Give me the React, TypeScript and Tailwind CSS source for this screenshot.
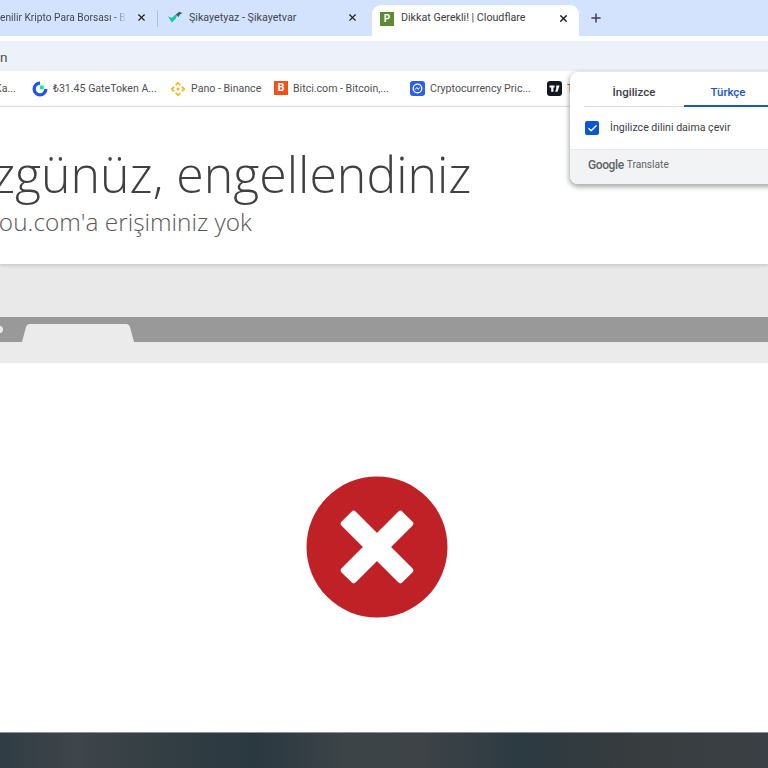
import { Check, Plus, X } from 'lucide-react';

const ui = "font-['Roboto',sans-serif]";

function GateIcon() {
  return (
    <svg width="16" height="16" viewBox="0 0 16 16" fill="none">
      <path d="M8 .5a7.500 7.500 0 1 0 7.500 7.500h-3.300A4.200 4.200 0 1 1 8 3.800z" fill="#2354e6" />
      <rect x="8" y="4.500" width="3.800" height="3.800" fill="#17e6a1" />
    </svg>
  );
}

function BinanceIcon() {
  return (
    <svg width="16" height="16" viewBox="0 0 16 16" fill="#f3ba2f">
      <path d="M8 .5 11 3.500 9.700 4.800 8 3.100 6.300 4.800 5 3.500zM3.500 5 4.800 6.300 3.100 8 4.800 9.700 3.500 11 .5 8zM12.500 5 15.500 8l-3 3-1.300-1.300L12.900 8l-1.700-1.700zM8 6.100 9.900 8 8 9.900 6.100 8zM5 12.500l1.300-1.300L8 12.900l1.700-1.700 1.300 1.300-3 3z" />
    </svg>
  );
}

function CmcIcon() {
  return (
    <svg width="15" height="15" viewBox="0 0 15 15" fill="none">
      <rect width="15" height="15" rx="3" fill="#2b5fe8" />
      <circle cx="7.500" cy="7.500" r="4.300" stroke="#fff" strokeWidth="1.300" />
      <path d="M5.200 8.600 6.800 6.400l1.400 2 1.600-2" stroke="#fff" strokeWidth="1" />
    </svg>
  );
}

function TradingViewIcon() {
  return (
    <svg width="15" height="15" viewBox="0 0 15 15">
      <rect width="15" height="15" rx="3" fill="#131722" />
      <path d="M2.500 4.500h5v2H6.400v4.200H4.200V6.500H2.500zM9.200 4.500h3.300l-2 6.200H8.200l1.100-3.500z" fill="#fff" />
    </svg>
  );
}

function SikayetIcon() {
  return (
    <svg width="15" height="13" viewBox="0 0 15 13">
      <path d="M0 5.500 3.800 6.800 9.500 2 8 7.500 3.800 11.500z" fill="#19c7a5" />
      <path d="M8 3.500 11 .8 14.500 2 12 3.500 10.500 6z" fill="#34606f" />
    </svg>
  );
}

function Bookmark({ icon, label, width }: { icon: React.ReactNode; label: string; width: string }) {
  return (
    <div className={`flex items-center gap-[5px] shrink-0 ${width}`}>
      {icon}
      <span className="text-[10.600px] text-[#505050] whitespace-nowrap">{label}</span>
    </div>
  );
}

function BrowserChrome() {
  return (
    <div className={ui}>
      {/* tab strip */}
      <div className="h-[36px] bg-[#d3e3fd] flex items-center text-[10.700px] text-[#3f4650] overflow-hidden">
        <div className="w-[157px] shrink-0 flex items-center justify-between pr-[10px]">
          <span className="w-[126px] overflow-hidden whitespace-nowrap text-[10.200px] [mask-image:linear-gradient(90deg,#000_90%,transparent)]">enilir Kripto Para Borsası - B</span>
          <X size={11} strokeWidth={2.500} className="text-[#1f1f1f]" />
        </div>
        <div className="w-px h-[17px] bg-[#a8c0e4] shrink-0" />
        <div className="w-[214px] shrink-0 flex items-center pl-[10px] pr-[14px]">
          <SikayetIcon />
          <span className="ml-[6px] flex-1 whitespace-nowrap">Şikayetyaz - Şikayetvar</span>
          <X size={11} strokeWidth={2.500} className="text-[#1f1f1f]" />
        </div>
        <div className="w-[207px] h-[31px] mt-[5px] shrink-0 bg-white rounded-t-[9px] flex items-center pb-[4px] pl-[8px] pr-[10px] text-[#3c3c3c]">
          <div className="w-[14px] h-[14px] bg-[#5f8a34] flex items-center justify-center text-white text-[10px] font-bold leading-none">P</div>
          <span className="ml-[7px] flex-1 whitespace-nowrap">Dikkat Gerekli! | Cloudflare</span>
          <X size={11} strokeWidth={3} className="text-[#1f1f1f]" />
        </div>
        <Plus size={14} strokeWidth={2.500} className="ml-[10px] text-[#3c4043]" />
      </div>
      {/* address row */}
      <div className="bg-white pt-[5px]">
        <div className="h-[30px] bg-[#edf2fa] flex items-center text-[13.500px] text-[#4a4a4a] pt-[2px]">
          <span>n</span>
        </div>
      </div>
      {/* bookmarks */}
      <div className="h-[36px] bg-white border-b border-[#e6e6e6] flex items-center overflow-hidden">
        <span className="w-[37px] shrink-0 text-[10.600px] text-[#505050] whitespace-nowrap -ml-[5px]">Ka...</span>
        <Bookmark icon={<GateIcon />} label="₺31.45 GateToken A..." width="w-[138px]" />
        <Bookmark icon={<BinanceIcon />} label="Pano - Binance" width="w-[104px]" />
        <Bookmark
          icon={<div className="w-[14px] h-[14px] bg-[#f2501b] text-white text-[11px] font-bold leading-[14px] text-center">B</div>}
          label="Bitci.com - Bitcoin,..."
          width="w-[136px]"
        />
        <Bookmark icon={<CmcIcon />} label="Cryptocurrency Pric..." width="w-[137px]" />
        <Bookmark icon={<TradingViewIcon />} label="T" width="w-[30px]" />
      </div>
    </div>
  );
}

function TranslatePopup() {
  return (
    <div className={`${ui} absolute left-[570px] top-[72px] w-[220px] h-[112px] bg-white rounded-[8px] shadow-[0_2px_5px_1px_rgba(60,64,67,0.45)] overflow-hidden`}>
      <div className="mx-[14px] h-[35px] flex border-b border-[#dadce0] text-[11.500px] font-medium pt-[8px]">
        <div className="w-[100px] flex items-center justify-center text-[#3c4043]">İngilizce</div>
        <div className="w-[84px] -mb-px border-b-2 border-[#1a56c4] flex items-center justify-center text-[#1a56c4] pl-[4px]">Türkçe</div>
      </div>
      <div className="h-[42px] flex items-center pl-[15px]">
        <div className="w-[14px] h-[14px] rounded-[2px] bg-[#0b57d0] flex items-center justify-center">
          <Check size={11} strokeWidth={3} className="text-white" />
        </div>
        <span className="ml-[11px] text-[10.600px] text-[#3c4043]">İngilizce dilini daima çevir</span>
      </div>
      <div className="h-[35px] bg-[#f1f3f4] border-t border-[#e8eaed] flex items-center pb-[4px] pl-[18px] text-[#5f6368]">
        <span className="text-[12px] tracking-[-0.4px] font-medium">Google</span>
        <span className="ml-[3px] text-[10.200px]">Translate</span>
      </div>
    </div>
  );
}

export default function App() {
  return (
    <div className="relative w-[768px] h-[768px] overflow-hidden bg-white">
      <BrowserChrome />
      {/* page title card */}
      <div className="h-[157px] bg-white font-['Open_Sans',sans-serif] font-light relative shadow-[0_1px_4px_rgba(0,0,0,0.18)] whitespace-nowrap">
        <h1 className="pt-[33px] -ml-[44px] text-[50px] leading-[68px] text-[#404040]">Üzgünüz, engellendiniz</h1>
        <p className="-ml-[14px] -mt-[2px] text-[24.400px] leading-[32px] text-[#595959]">You.com'a erişiminiz yok</p>
      </div>
      {/* browser illustration */}
      <div className="h-[53px] bg-[#e9e9e9]" />
      <div className="h-[25px] bg-[#999999] flex items-end relative overflow-hidden">
        <div className="absolute -left-[4px] top-[9px] w-[7px] h-[7px] rounded-full bg-[#ebebeb]" />
        <svg width="112" height="18" viewBox="0 0 112 18" className="ml-[22px]">
          <path d="M0 18 4 3Q5 0 8 0H104Q107 0 108 3L112 18Z" fill="#ebebeb" />
        </svg>
      </div>
      <div className="h-[21px] bg-[#ebebeb]" />
      {/* error mark */}
      <div className="h-[369px] flex items-start justify-center">
        <svg width="142" height="142" viewBox="0 0 142 142" className="mt-[113px] ml-[-14px]">
          <circle cx="71" cy="71" r="70.500" fill="#c02126" />
          <rect x="28" y="61" width="86" height="20" rx="3" fill="#fff" transform="rotate(45 71 71)" />
          <rect x="28" y="61" width="86" height="20" rx="3" fill="#fff" transform="rotate(-45 71 71)" />
        </svg>
      </div>
      {/* footer strip */}
      <div className="h-[36px] border-t border-[#8a9499] bg-[linear-gradient(90deg,#2f3d44_0%,#3f454a_10%,#343f44_20%,#2a3840_33%,#3c4448_45%,#3d4347_55%,#2c3a42_68%,#373c3e_82%,#3b4046_100%)]" />
      <TranslatePopup />
    </div>
  );
}
